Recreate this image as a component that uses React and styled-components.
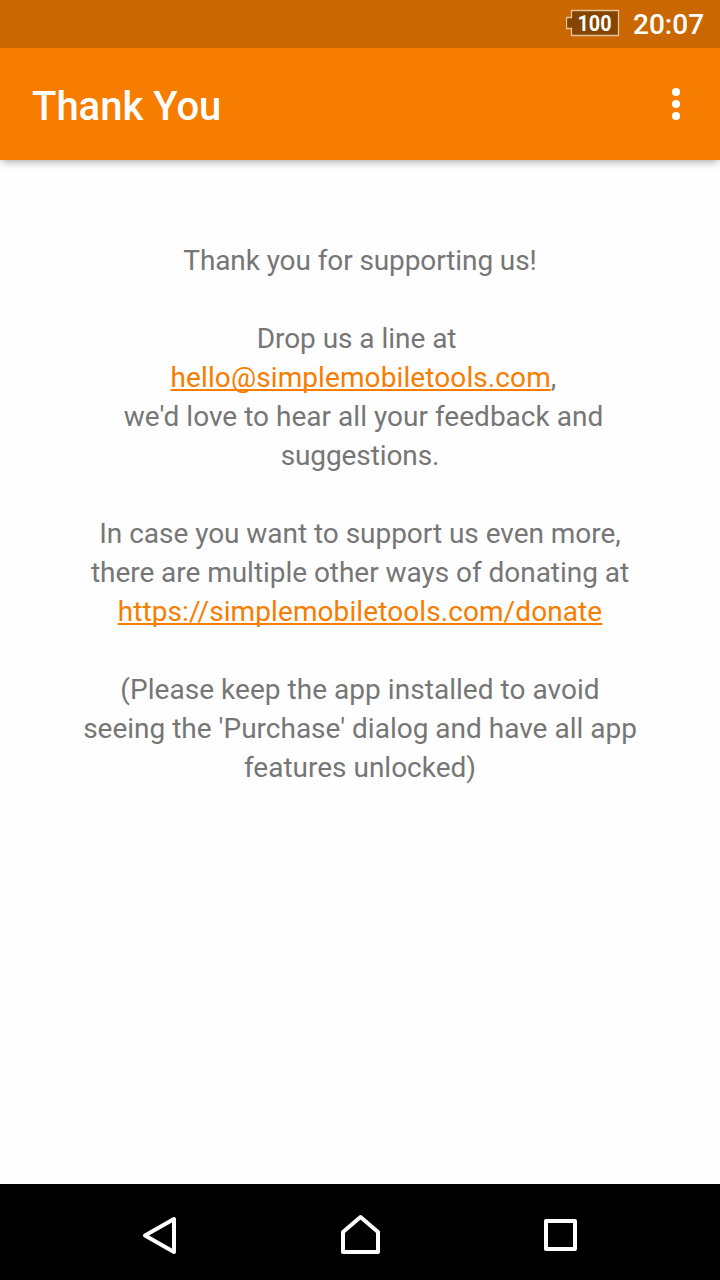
import React from 'react';
import styled, { createGlobalStyle } from 'styled-components';

const GlobalStyle = createGlobalStyle`
  * { box-sizing: border-box; }
  body { margin: 0; background: #fefefe; font-family: Roboto, sans-serif; }
`;

const Screen = styled.div`
  width: 720px;
  height: 1280px;
  display: flex;
  flex-direction: column;
  background: #fefefe;
  overflow: hidden;
`;

const StatusBar = styled.div`
  position: relative;
  z-index: 1;
  height: 48px;
  flex: none;
  display: flex;
  align-items: center;
  justify-content: flex-end;
  gap: 13px;
  padding-right: 16px;
  background: #cb6700;
  color: #fff;
`;

const Battery = styled.svg`
  display: block;
  margin-bottom: 2px;
`;

const Clock = styled.span`
  width: 71px;
  font-size: 28px;
  line-height: 48px;
  font-weight: 500;
  padding-top: 2px;
`;

const AppBar = styled.header`
  height: 112px;
  flex: none;
  display: flex;
  align-items: center;
  justify-content: space-between;
  padding: 4px 38px 0 32px;
  background: #f77d00;
  color: #fff;
  box-shadow: 0 4px 8px -2px rgba(0, 0, 0, 0.33);
`;

const Title = styled.h1`
  margin: 2px 0 0;
  font-size: 40px;
  font-weight: 500;
  line-height: 48px;
`;

const Overflow = styled.svg`
  display: block;
  margin-bottom: 4px;
`;

const Content = styled.main`
  flex: 1;
  padding-top: 81px;
  color: #767676;
  font-size: 28px;
  line-height: 39px;
  text-align: center;
  white-space: pre;
`;

const Paragraph = styled.p`
  margin: 0 0 39px;
`;

const Line = styled.span`
  display: block;
  letter-spacing: ${(p) => p.$tracking || 0}px;
`;

const Link = styled.a`
  color: #f77d00;
  text-decoration: underline;
  text-decoration-thickness: 2px;
  text-underline-offset: 2px;
  text-decoration-skip-ink: none;
`;

const NavBar = styled.nav`
  height: 96px;
  flex: none;
  display: flex;
  align-items: center;
  justify-content: center;
  gap: 152px;
  background: #000;
`;

const NavIcon = styled.svg`
  display: block;
  fill: none;
  stroke: #fff;
  stroke-width: 4;
  stroke-linejoin: round;
`;

export default function App() {
  return (
    <Screen>
      <GlobalStyle />
      <StatusBar>
        <Battery width="54" height="28" viewBox="0 0 54 28">
          <path d="M5.5 1.5H52.5V26.5H5.5V19.5H0.5V8.5H5.5Z" fill="#854400" stroke="#e8c39c" strokeWidth="1.3" />
          <text x="11.5" y="21.5" fontSize="21.5" fontWeight="700" fill="#fff" textLength="34" lengthAdjust="spacingAndGlyphs">100</text>
        </Battery>
        <Clock>20:07</Clock>
      </StatusBar>
      <AppBar>
        <Title>Thank You</Title>
        <Overflow width="12" height="32" viewBox="0 0 12 32" fill="#fff">
          <circle cx="6" cy="4" r="4" />
          <circle cx="6" cy="16" r="4" />
          <circle cx="6" cy="28" r="4" />
        </Overflow>
      </AppBar>
      <Content>
        <Paragraph>
          <Line $tracking={-0.1}>Thank you for supporting us!</Line>
        </Paragraph>
        <Paragraph>
          <Line $tracking={-0.04}>{'Drop us a line at '}</Line>
          <Line $tracking={0.1}>{' '}<Link>hello@simplemobiletools.com</Link>,</Line>
          <Line $tracking={0.02}>{" we'd love to hear all your feedback and"}</Line>
          <Line $tracking={-0.1}>suggestions.</Line>
        </Paragraph>
        <Paragraph>
          <Line $tracking={-0.04}>In case you want to support us even more,</Line>
          <Line $tracking={-0.04}>there are multiple other ways of donating at</Line>
          <Line $tracking={0.09}><Link>https://simplemobiletools.com/donate</Link></Line>
        </Paragraph>
        <Paragraph>
          <Line $tracking={0.04}>(Please keep the app installed to avoid</Line>
          <Line>seeing the 'Purchase' dialog and have all app</Line>
          <Line>features unlocked)</Line>
        </Paragraph>
      </Content>
      <NavBar>
        <NavIcon width="48" height="48" viewBox="0 0 48 48"><path d="M38 11V44L9 27.5Z" /></NavIcon>
        <NavIcon width="48" height="48" viewBox="0 0 48 48"><path d="M7 44V24L24.5 9L42 24V44Z" /></NavIcon>
        <NavIcon width="48" height="48" viewBox="0 0 48 48"><path d="M10 13H39V41H10Z" /></NavIcon>
      </NavBar>
    </Screen>
  );
}
